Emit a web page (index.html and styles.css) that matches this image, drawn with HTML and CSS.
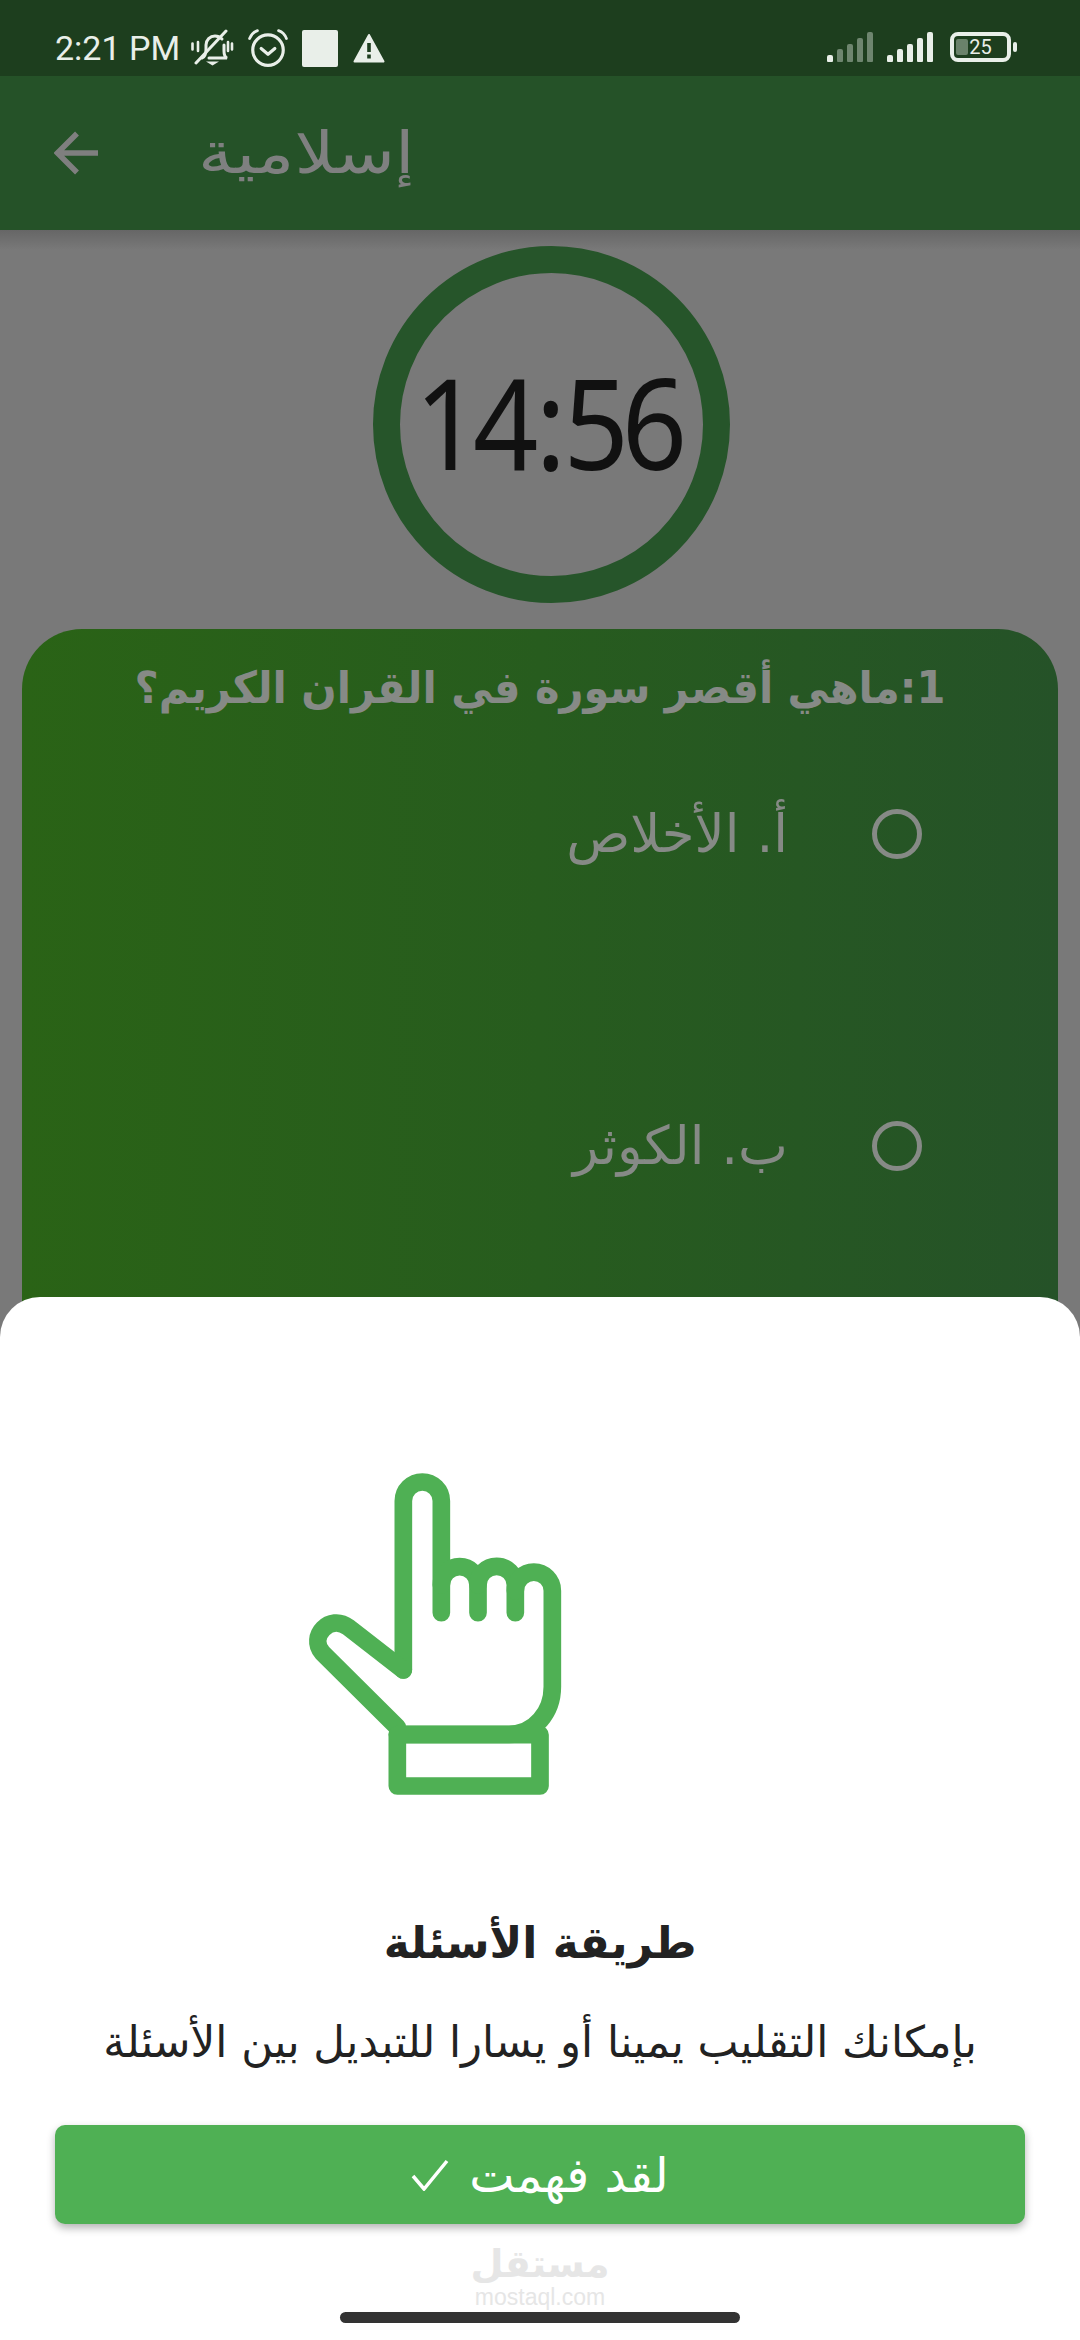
FILE: index.html
```html
<!DOCTYPE html>
<html lang="ar">
<head>
    <meta charset="UTF-8">
    <meta name="viewport" content="width=device-width, initial-scale=1.0">
    <title>إسلامية</title>
    <link rel="stylesheet" href="styles.css">
</head>
<body>
    <div class="screen">
        <div class="status-bar">
            <div class="status-left">
                <span class="status-time">2:21 PM</span>
                <svg class="icon-mute" viewBox="0 0 42 38" fill="none" stroke="#e9efe9" stroke-linecap="round">
                    <path d="M11 29c3-1 4-4 4-9v-4c0-5 4-9 9-9 3 0 5 1 7 3M33 16v6c0 4 1 6 3 7H18" stroke-width="3"/>
                    <path d="M15 32.500h13l-6.500 4z" fill="#e9efe9" stroke="none"/>
                    <path d="M5 34 35 2" stroke-width="3"/>
                    <path d="M7 13v9M1.500 14.500v6M37 13v9M41 14.500v6" stroke-width="2.600"/>
                </svg>
                <svg class="icon-alarm" viewBox="0 0 38 36" fill="none" stroke="#e9efe9" stroke-linecap="round">
                    <circle cx="19" cy="20" r="14.500" stroke-width="3"/>
                    <path d="M12.500 18.500 19 24l6.500-5.500" stroke-width="3" stroke-linejoin="round"/>
                    <path d="M1.500 9C3 5 6 2.500 9 1.500M36.500 9C35 5 32 2.500 29 1.500" stroke-width="2.600"/>
                </svg>
                <span class="status-square"></span>
                <svg class="icon-warning" viewBox="0 0 32 30">
                    <path d="M16 2 30.500 28.500H1.500z" fill="#e9efe9" stroke="#e9efe9" stroke-width="2" stroke-linejoin="round"/>
                    <rect x="14.200" y="10" width="3.600" height="9" fill="#1d3e1e"/>
                    <rect x="14.200" y="21.500" width="3.600" height="4" fill="#1d3e1e"/>
                </svg>
            </div>
            <div class="status-right">
                <div class="signal signal-weak">
                    <span class="bar bar-1"></span><span class="bar bar-2"></span><span class="bar bar-3"></span><span class="bar bar-4"></span><span class="bar bar-5"></span>
                </div>
                <div class="signal">
                    <span class="bar bar-1"></span><span class="bar bar-2"></span><span class="bar bar-3"></span><span class="bar bar-4"></span><span class="bar bar-5"></span>
                </div>
                <div class="battery">
                    <div class="battery-body">
                        <span class="battery-fill"></span>
                        <span class="battery-level">25</span>
                    </div>
                    <span class="battery-nub"></span>
                </div>
            </div>
        </div>

        <header class="app-bar">
            <svg class="back-arrow" viewBox="0 0 44 44" fill="none" stroke="#7f7f7f" stroke-width="5.500">
                <path d="M44 22H4M23 2.500 3.500 22 23 41.500"/>
            </svg>
            <h1 class="app-title">إسلامية</h1>
        </header>

        <main class="quiz">
            <div class="timer">
                <span class="timer-text">14<span class="timer-colon">:</span>56</span>
            </div>
            <section class="question-card">
                <h2 class="question">1:ماهي أقصر سورة في القران الكريم؟</h2>
                <div class="option">
                    <span class="radio"></span>
                    <span class="option-label">أ. الأخلاص</span>
                </div>
                <div class="option">
                    <span class="radio"></span>
                    <span class="option-label">ب. الكوثر</span>
                </div>
            </section>
        </main>

        <div class="sheet">
            <svg class="hand" viewBox="0 0 960 1140" fill="none" stroke="#4fb054" stroke-width="53" stroke-linecap="round" stroke-linejoin="round">
                <path d="M370 690V183a57 57 0 0 1 114 0V518"/>
                <path d="M484 435a55 55 0 0 1 110 0V518"/>
                <path d="M594 435a55 55 0 0 1 112 0V518"/>
                <path d="M706 452a55 55 0 0 1 111 0V740C817 815 765 883 687 883H352"/>
                <path d="M370 690 205 562C150 520 85 590 127 638L352 862"/>
                <rect x="352" y="884" width="428" height="154"/>
            </svg>
            <h2 class="sheet-title">طريقة الأسئلة</h2>
            <p class="sheet-text">بإمكانك التقليب يمينا أو يسارا للتبديل بين الأسئلة</p>
            <button class="confirm-button">
                <span>لقد فهمت</span>
                <svg class="check" viewBox="0 0 38 32" fill="none" stroke="#fff" stroke-width="3.500">
                    <path d="M2 17 13 30 36 2"/>
                </svg>
            </button>
            <div class="watermark">
                <span class="watermark-ar">مستقل</span>
                <span class="watermark-en">mostaql.com</span>
            </div>
            <div class="home-bar"></div>
        </div>
    </div>
</body>
</html>
```

FILE: styles.css
```css
* {
    margin: 0;
    padding: 0;
    box-sizing: border-box;
}

body {
    width: 1080px;
    height: 2340px;
    overflow: hidden;
    font-family: "DejaVu Sans", "Noto Sans", sans-serif;
    background: #797979;
}

.screen {
    position: relative;
    width: 1080px;
    height: 2340px;
    overflow: hidden;
    display: flex;
    flex-direction: column;
    background: linear-gradient(180deg, #666 230px, #797979 250px);
}

.status-bar {
    height: 76px;
    padding: 0 63px 0 55px;
    background: #1d3e1e;
    display: flex;
    align-items: flex-start;
    justify-content: space-between;
}

.status-left {
    height: 38px;
    margin-top: 29px;
    display: flex;
    align-items: center;
}

.status-time {
    font-family: Roboto, sans-serif;
    font-size: 34px;
    color: #e9efe9;
    width: 135px;
}

.icon-mute {
    width: 44px;
    height: 38px;
}

.icon-alarm {
    width: 40px;
    height: 38px;
    margin-left: 14px;
}

.status-square {
    width: 36px;
    height: 37px;
    margin-left: 14px;
    background: #e9efe9;
    border-radius: 2px;
}

.icon-warning {
    width: 32px;
    height: 30px;
    margin-left: 15px;
}

.status-right {
    margin-top: 32px;
    display: flex;
    align-items: flex-end;
    gap: 12px;
}

.signal {
    width: 48px;
    height: 30px;
    display: flex;
    align-items: flex-end;
    gap: 4px;
}

.bar {
    width: 6px;
    background: #e9efe9;
    border-radius: 2px 2px 1px 1px;
}

.signal-weak .bar {
    opacity: 0.4;
}

.signal-weak .bar-1 {
    opacity: 1;
}

.bar-1 { height: 7px; }
.bar-2 { height: 13px; }
.bar-3 { height: 18px; }
.bar-4 { height: 24px; }
.bar-5 { height: 30px; }

.battery {
    display: flex;
    align-items: center;
    gap: 2px;
    margin-left: 3px;
}

.battery-body {
    position: relative;
    width: 61px;
    height: 30px;
    border: 4px solid #e9efe9;
    border-radius: 8px;
    display: flex;
    align-items: center;
    justify-content: center;
}

.battery-fill {
    position: absolute;
    left: 2px;
    top: 3px;
    width: 12px;
    height: 16px;
    background: #6a826a;
    border-radius: 2px;
}

.battery-level {
    position: relative;
    font-family: Roboto, sans-serif;
    font-size: 20px;
    color: #e9efe9;
}

.battery-nub {
    width: 4px;
    height: 10px;
    background: #e9efe9;
    border-radius: 2px;
}

.app-bar {
    height: 154px;
    padding-left: 54px;
    background: #255228;
    display: flex;
    align-items: center;
}

.back-arrow {
    width: 44px;
    height: 44px;
    margin-top: -1px;
}

.app-title {
    margin-left: 100px;
    font-size: 58px;
    font-weight: 400;
    color: #7f8080;
    transform: scaleX(1.21);
    transform-origin: left center;
}

.quiz {
    padding: 16px 22px 0;
    display: flex;
    flex-direction: column;
    align-items: center;
}

.timer {
    width: 357px;
    height: 357px;
    margin-left: 22px;
    border: 27px solid #26552a;
    border-radius: 50%;
    display: flex;
    align-items: center;
    justify-content: center;
}

.timer-text {
    font-family: "Noto Sans", sans-serif;
    font-size: 127px;
    color: #111;
    letter-spacing: -8px;
    transform: translate(-4px, -4px) scaleX(0.9);
}

.timer-colon {
    margin: 0 5px;
}

.question-card {
    width: 100%;
    height: 900px;
    margin-top: 26px;
    padding-top: 24px;
    background: linear-gradient(90deg, #2a6316, #275c1e 50%, #255228);
    border-radius: 60px 60px 0 0;
}

.question {
    font-size: 44px;
    font-weight: 700;
    line-height: 70px;
    color: #868a86;
    text-align: center;
    direction: rtl;
    white-space: nowrap;
    transform: scaleX(0.945);
}

.option {
    height: 312px;
    padding-right: 136px;
    direction: rtl;
    display: flex;
    align-items: flex-start;
    font-size: 53px;
    color: #868a86;
}

.radio {
    width: 50px;
    height: 50px;
    margin-top: 86px;
    border: 5px solid #868a86;
    border-radius: 50%;
}

.option-label {
    margin-right: 84px;
    margin-top: 80px;
}

.sheet {
    position: absolute;
    left: 0;
    right: 0;
    top: 1297px;
    bottom: 0;
    padding: 143px 55px 0;
    background: #fff;
    border-radius: 40px 40px 0 0;
    display: flex;
    flex-direction: column;
    align-items: center;
}

.hand {
    width: 320px;
    height: 380px;
    margin-right: 200px;
    flex-shrink: 0;
}

.sheet-title {
    margin-top: 93px;
    font-size: 44px;
    font-weight: 700;
    line-height: 60px;
    color: #222;
    direction: rtl;
}

.sheet-text {
    margin-top: 39px;
    font-size: 43.500px;
    line-height: 60px;
    color: #222;
    direction: rtl;
    white-space: nowrap;
}

.confirm-button {
    width: 970px;
    height: 99px;
    margin-top: 53px;
    border: none;
    border-radius: 10px;
    background: #4fb054;
    box-shadow: 0 4px 8px rgba(0, 0, 0, 0.3);
    color: #fff;
    font-family: inherit;
    font-size: 48px;
    display: flex;
    align-items: center;
    justify-content: center;
    gap: 20px;
    direction: rtl;
}

.check {
    width: 38px;
    height: 32px;
}

.watermark {
    margin-top: 18px;
    display: flex;
    flex-direction: column;
    align-items: center;
    color: #e6e6e6;
}

.watermark-ar {
    font-size: 38px;
    font-weight: 700;
    line-height: 44px;
}

.watermark-en {
    font-family: "Liberation Sans", sans-serif;
    font-size: 23px;
    line-height: 22px;
}

.home-bar {
    position: absolute;
    left: 340px;
    top: 1015px;
    width: 400px;
    height: 11px;
    background: #333;
    border-radius: 6px;
}
```
